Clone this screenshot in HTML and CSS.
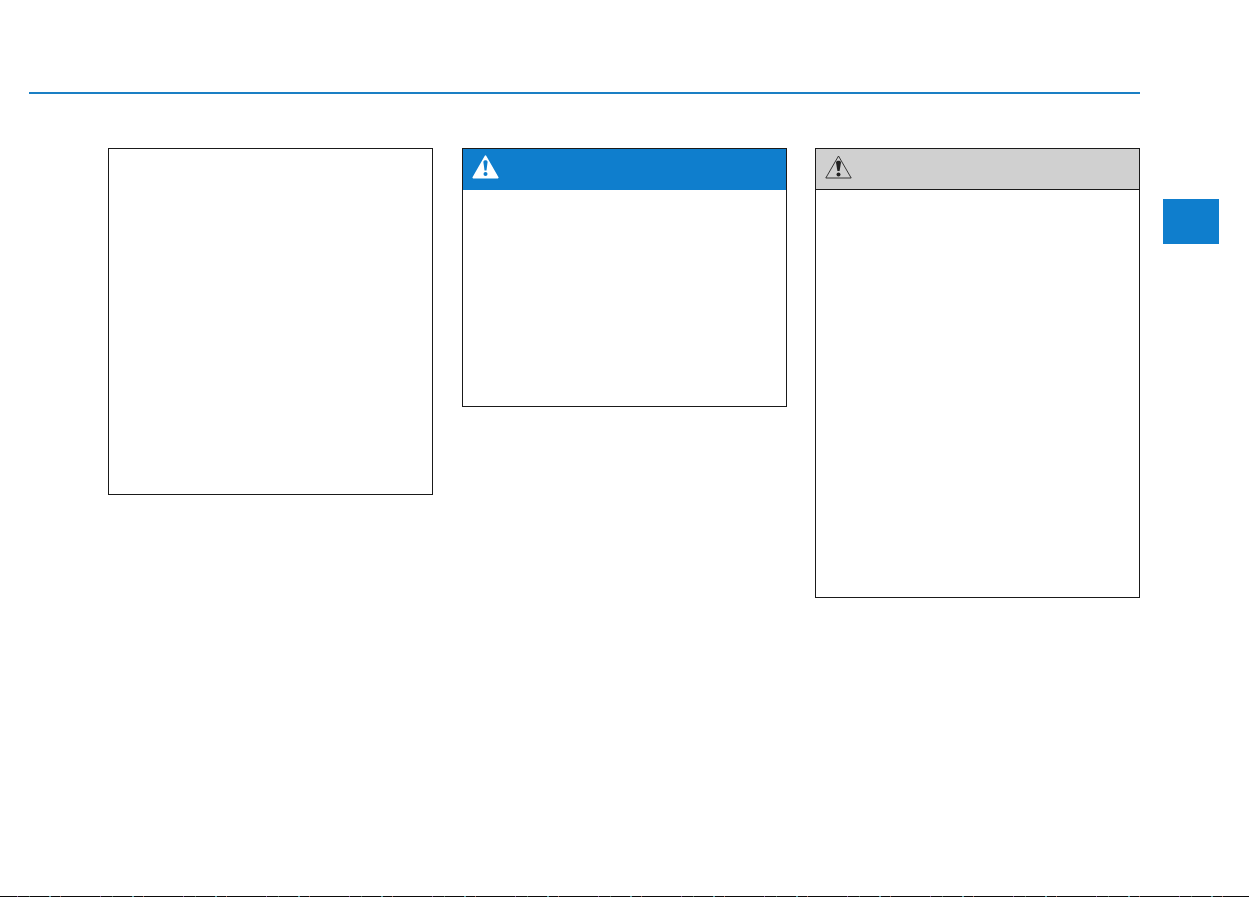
FILE: index.html
```html
<!DOCTYPE html>
<html lang="en">
<head>
<meta charset="utf-8">
<title>Manual page</title>
<link rel="stylesheet" href="styles.css">
</head>
<body>
<div class="page">
  <div class="main">
    <div class="rule"></div>
    <div class="columns">
      <section class="box box-plain"></section>
      <section class="box box-warning">
        <header class="box-head head-blue">
          <svg class="icon" viewBox="0 0 27 24" aria-hidden="true">
            <path fill="#fff" stroke="#fff" stroke-width="1.6" stroke-linejoin="round" d="M13.5 1.2 25.8 22.6H1.2Z"/>
            <path fill="#0f7ecd" d="M11.4 7c0-2.2 4.2-2.2 4.2 0L14.5 15.6h-2Z"/>
            <circle fill="#0f7ecd" cx="13.5" cy="19" r="2"/>
          </svg>
        </header>
      </section>
      <section class="box box-caution">
        <header class="box-head head-grey">
          <svg class="icon" viewBox="0 0 27 24" aria-hidden="true">
            <path fill="none" stroke="#222" stroke-width=".9" stroke-linejoin="round" d="M13.5 1 26.2 23H.8Z"/>
            <path fill="#222" d="M11 7.6c0-2.4 5-2.4 5 0L14.6 16h-2.2Z"/>
            <circle fill="#222" cx="13.5" cy="19.6" r="2"/>
          </svg>
        </header>
      </section>
    </div>
  </div>
  <aside class="side"><div class="tab"></div></aside>
</div>
<div class="bottom-line"></div>
</body>
</html>
```

FILE: styles.css
```css
html, body {
  margin: 0;
  padding: 0;
  height: 100%;
  background: #fff;
  overflow: hidden;
}
body {
  position: relative;
}
.page {
  display: flex;
  align-items: flex-start;
  padding: 92px 0 0 29px;
}
.main {
  width: 1111px;
  flex: none;
}
.rule {
  height: 2px;
  background: #1a7fc4;
}
.columns {
  display: flex;
  align-items: flex-start;
  gap: 29px;
  margin-top: 54px;
  padding-left: 79px;
}
.box {
  box-sizing: border-box;
  width: 325px;
  border: 1px solid #1a1a1a;
  flex: none;
}
.box-plain { height: 347px; }
.box-warning { height: 259px; }
.box-caution { height: 450px; margin-left: -1px; }
.box-head {
  box-sizing: border-box;
  height: 41px;
  display: flex;
  align-items: flex-start;
  padding: 6px 0 0 9px;
}
.head-blue { background: #0f7ecd; }
.head-grey { background: #d0d0d0; border-bottom: 1px solid #1a1a1a; }
.icon {
  width: 27px;
  height: 24px;
  display: block;
}
.side {
  flex: none;
  padding: 107px 0 0 23px;
}
.tab {
  width: 56px;
  height: 45px;
  background: #0f7ecd;
}
.bottom-line {
  position: absolute;
  left: 0;
  right: 0;
  bottom: 0;
  height: 1px;
  background: repeating-linear-gradient(90deg,
    #0a0a0a 0 17px, #8a5a9c 17px 18px, #0a0a0a 18px 29px, #4f6f5a 29px 30px,
    #0a0a0a 30px 49px, #5aa0a8 49px 51px, #0a0a0a 51px 60px, #a8685a 60px 61px,
    #0a0a0a 61px 83px);
}
```
